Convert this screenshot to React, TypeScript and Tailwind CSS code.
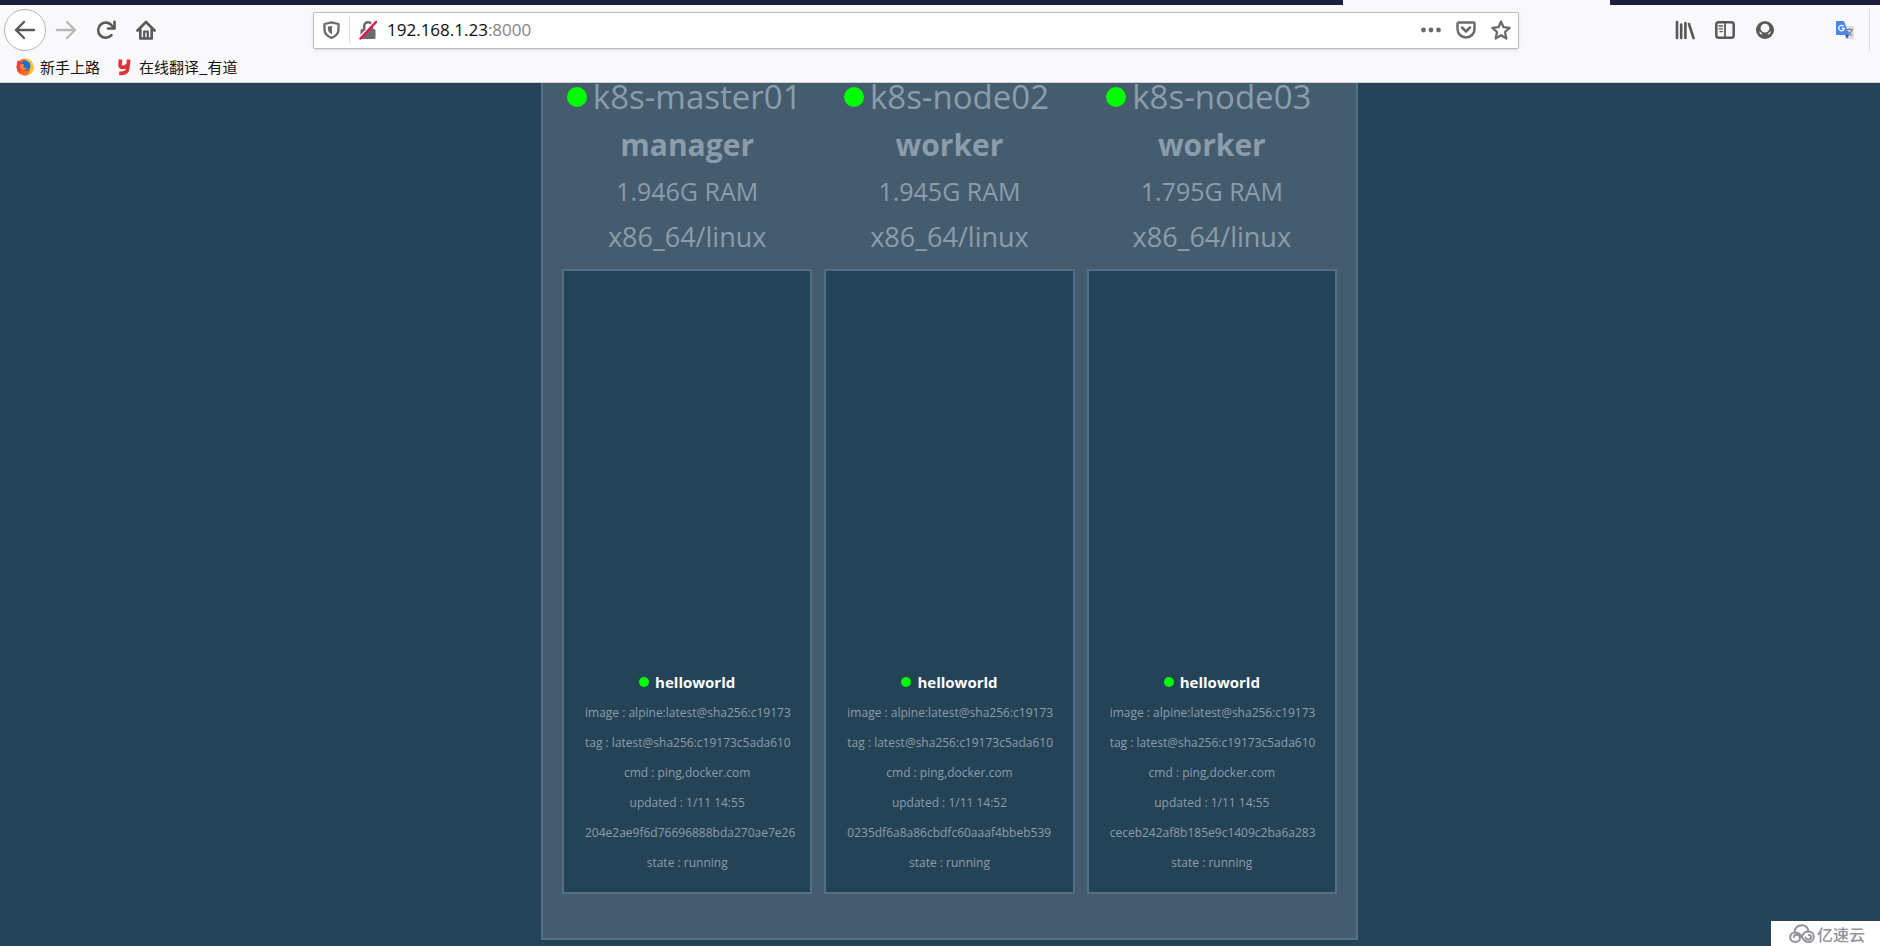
import { ReactNode } from 'react';
import clsx from 'clsx';

const nodes = [
  {
    name: 'k8s-master01',
    role: 'manager',
    ram: '1.946G RAM',
    updated: '1/11 14:55',
    container: '204e2ae9f6d76696888bda270ae7e26',
  },
  {
    name: 'k8s-node02',
    role: 'worker',
    ram: '1.945G RAM',
    updated: '1/11 14:52',
    container: '0235df6a8a86cbdfc60aaaf4bbeb539',
  },
  {
    name: 'k8s-node03',
    role: 'worker',
    ram: '1.795G RAM',
    updated: '1/11 14:55',
    container: 'ceceb242af8b185e9c1409c2ba6a283',
  },
];

const IconButton = ({ label, className, children }: { label: string; className?: string; children: ReactNode }) => (
  <button type="button" aria-label={label} className={clsx('flex shrink-0 items-center justify-center', className)}>
    {children}
  </button>
);

const BackIcon = () => (
  <svg width="22" height="20" viewBox="0 0 22 20" fill="none" stroke="currentColor" strokeWidth="2.4" strokeLinecap="round" strokeLinejoin="round">
    <path d="M20 10H2M10 2 2 10l8 8" />
  </svg>
);

const ForwardIcon = () => (
  <svg width="22" height="20" viewBox="0 0 22 20" fill="none" stroke="currentColor" strokeWidth="2.4" strokeLinecap="round" strokeLinejoin="round">
    <path d="M2 10h18M12 2l8 8-8 8" />
  </svg>
);

const ReloadIcon = () => (
  <svg width="20" height="20" viewBox="0 0 20 20" fill="none" stroke="currentColor" strokeWidth="2.6" strokeLinecap="round" strokeLinejoin="round">
    <path d="M15.5 15.2A7.6 7.6 0 1 1 15.800 5.500L18 8" />
    <path d="M18.5 1.8v6.700H12" />
  </svg>
);

const HomeIcon = () => (
  <svg width="20" height="20" viewBox="0 0 20 20" fill="none" stroke="currentColor" strokeWidth="2.6" strokeLinecap="round" strokeLinejoin="round">
    <path d="M1.5 10.5 10 2l8.500 8.500M4.300 9.500V18.500h11.400V9.500" />
    <path d="M8.2 18v-6.500h3.600V18" strokeWidth="2.2" />
  </svg>
);

const ShieldIcon = () => (
  <svg width="17" height="18" viewBox="0 0 17 18" fill="none" stroke="currentColor" strokeWidth="2.3" strokeLinejoin="round">
    <path d="M8.5 1.3 15.500 3v5.500c0 3.900-3 6.800-7 8.300-4-1.500-7-4.400-7-8.300V3z" />
    <path d="M9 5v8.300C6.500 12 5 10.500 5 8.200V5.600z" fill="currentColor" stroke="none" />
  </svg>
);

const InsecureIcon = () => (
  <svg width="18" height="20" viewBox="0 0 18 20" fill="none">
    <path d="M5.2 10V6a3.800 3.800 0 0 1 7.600 0v4" stroke="#6b6b6d" strokeWidth="2.6" />
    <rect x="1.5" y="9" width="15" height="10" rx="1.5" fill="#6b6b6d" />
    <path d="M.5 17.5 16 1" stroke="#fff" strokeWidth="2" />
    <path d="M1.5 18.5 17 2" stroke="#e3114d" strokeWidth="2.5" strokeLinecap="round" />
  </svg>
);

const DotsIcon = () => (
  <svg width="20" height="6" viewBox="0 0 20 6" fill="currentColor">
    <circle cx="2.5" cy="3" r="2.4" />
    <circle cx="10" cy="3" r="2.4" />
    <circle cx="17.5" cy="3" r="2.4" />
  </svg>
);

const PocketIcon = () => (
  <svg width="20" height="18" viewBox="0 0 20 18" fill="none" stroke="currentColor" strokeWidth="2.5" strokeLinecap="round" strokeLinejoin="round">
    <path d="M2.5 1.5h15a1 1 0 0 1 1 1V8a8.500 8.500 0 0 1-17 0V2.500a1 1 0 0 1 1-1z" />
    <path d="M6 6.500 10 10.500l4-4" />
  </svg>
);

const StarIcon = () => (
  <svg width="20" height="20" viewBox="0 0 20 20" fill="none" stroke="currentColor" strokeWidth="2.3" strokeLinejoin="round">
    <path d="m10 1.500 2.500 5.700 6.100.6-4.600 4.200 1.300 6.500-5.300-3.200-5.300 3.200L6 12 1.400 7.800l6.100-.6z" />
  </svg>
);

const LibraryIcon = () => (
  <svg width="20" height="20" viewBox="0 0 20 20" fill="none" stroke="currentColor" strokeWidth="2.6" strokeLinecap="round">
    <path d="M2 2v16M6.200 4.500V18M10.400 3v15M14 4l4.500 14" />
  </svg>
);

const SidebarIcon = () => (
  <svg width="20" height="18" viewBox="0 0 20 18" fill="none" stroke="currentColor" strokeWidth="2.5">
    <rect x="1.3" y="1.3" width="17.4" height="15.4" rx="2.5" />
    <path d="M10 1v16" strokeWidth="1.8" />
    <path d="M4 5h3.500M4 7.800h3.500M5 10.600h2.500" strokeWidth="1.3" strokeLinecap="round" />
  </svg>
);

const AccountIcon = () => (
  <svg width="18" height="18" viewBox="0 0 18 18">
    <circle cx="9" cy="9" r="9" fill="currentColor" />
    <circle cx="9" cy="7.2" r="4.4" fill="#f9f9fb" />
    <path d="M3.2 10.200c1.200.2 1.800.5 2.400 1.200 1.900 1.900 4.900 1.900 6.800 0 .6-.7 1.200-1 2.400-1.200-.2 1.500-.8 2.400-1.600 3.200-2.400-.9-6-.9-8.400 0-.8-.8-1.400-1.700-1.600-3.200z" fill="#f9f9fb" />
    <path d="M4.800 10.200c2 3.600 6.400 3.600 8.400 0" stroke="currentColor" strokeWidth="1.4" fill="none" />
  </svg>
);

const TranslateIcon = () => (
  <svg width="20" height="20" viewBox="0 0 20 20">
    <path d="M8 6h10a1 1 0 0 1 1 1v11a1 1 0 0 1-1 1h-6z" fill="#dcdcdc" />
    <path d="M11 9.500h7M14.500 8v1.500M17 9.500c-.5 2.500-2.500 4.500-4.500 5.500M12.500 11c1 2 2.500 3.500 4.500 4.500" stroke="#6f8594" strokeWidth="1.2" fill="none" />
    <path d="M10 15h4l-2 4z" fill="#2a56c6" />
    <path d="M2 1h7l5 14H2a1 1 0 0 1-1-1V2a1 1 0 0 1 1-1z" fill="#4a86f0" />
    <path d="M8.600 6.200A2.800 2.800 0 1 0 9.300 8.500H6.800" stroke="#fff" strokeWidth="1.3" fill="none" />
  </svg>
);

const FirefoxIcon = () => (
  <svg width="18" height="18" viewBox="0 0 18 18">
    <circle cx="9" cy="9.2" r="8.5" fill="#ff6a1f" />
    <path d="M9 .8c5 0 8.700 3.500 8.700 8.200 0 4-2.700 7.500-6.700 8.500 3-3 4-7 2.500-10C12.500 5 10.500 4 9 .8z" fill="#ffc928" />
    <path d="M1 6c0-2 .5-3 1.200-4 .5 1 1 1.500 2 1.800L6 7l-2 8C1.500 13 0 9 1 6z" fill="#ff3550" />
    <circle cx="9.3" cy="7.6" r="5.2" fill="#1e6fd0" />
    <path d="M4.200 6c1.500-.8 2.800-.2 4 1-1 .6-1.200 1.200-.8 2s2.300 1 3.600.6c-.8 2-3.200 3-5.200 1.800-1.600-1-2.400-3.400-1.600-5.400z" fill="#ff8a1a" />
  </svg>
);

const YoudaoIcon = () => (
  <svg width="14" height="18" viewBox="0 0 14 18" fill="none" stroke="#e0323c" strokeWidth="3.6" strokeLinejoin="round">
    <path d="M3.500 1.500 3 6.500c-.2 2 .8 2.900 2.700 2.900 2.200 0 3.600-.9 4.700-2.400M11.700 1.500l-1 9c-.4 3.500-3 5.300-8.500 4.800" />
  </svg>
);

const CloudLogo = () => (
  <svg width="26" height="20" viewBox="0 0 26 20" fill="none" stroke="currentColor" strokeWidth="2" strokeLinecap="round">
    <path d="M5.500 8.500C5.500 4.300 8.500 1.300 12.500 1.300c3.700 0 6.500 2.400 7 6.200 3 0 5.300 2.300 5.300 5.200s-2.300 5.300-5.300 5.300c-3.500 0-5-2.200-6.500-5-1.700-3-3.700-4.500-6.700-4.500-3 0-5.100 2-5.100 4.700S3.300 18 6.300 18c2.800 0 4.700-1.800 4.700-4 0-1.800-1.500-3.200-3.300-3.200-1.500 0-2.600 1-2.600 2.300" />
    <path d="M13.500 11.500c1-2.500 3-4 6-4M16.500 13.500c.5 1.300 1.600 2 3 2 1.500 0 2.500-1 2.500-2.300s-1-2.200-2.300-2.200" />
  </svg>
);

const BrowserChrome = () => (
  <header className="relative z-10 border-b border-[#cfcfd3] bg-[#f9f9fb] text-[#58585a]">
    <div className="flex h-[5px] justify-end">
      <div className="flex-1 bg-[#1c1e3d]" />
      <div className="w-[267px]" />
      <div className="w-[270px] bg-[#1c1e3d]" />
    </div>

    <div className="flex h-[50px] items-center pl-1">
      <nav className="flex items-center">
        <IconButton label="Back" className="size-[42px] rounded-full border border-[#b5b5b8] bg-white">
          <BackIcon />
        </IconButton>
        <IconButton label="Forward" className="size-10 text-[#b9b9bb]">
          <ForwardIcon />
        </IconButton>
        <IconButton label="Reload" className="size-10">
          <ReloadIcon />
        </IconButton>
        <IconButton label="Home" className="size-10">
          <HomeIcon />
        </IconButton>
      </nav>

      <div className="ml-[147px] flex h-[37px] flex-1 items-center rounded-xs border border-[#bdbdc0] bg-white text-[#6b6b6d] shadow-sm">
        <IconButton label="Tracking protection" className="w-[35px]">
          <ShieldIcon />
        </IconButton>
        <div className="h-[26px] w-px bg-[#dedee0]" />
        <IconButton label="Connection is not secure" className="w-[35px]">
          <InsecureIcon />
        </IconButton>
        <label className="relative ml-[2px] flex h-full flex-1 items-center text-[17px]">
          <span className="pointer-events-none absolute text-[#848487]">
            <span className="text-[#0c0c0d]">192.168.1.23</span>:8000
          </span>
          <input aria-label="Address" className="h-full w-full bg-transparent outline-none" />
        </label>
        <IconButton label="Page actions" className="w-[35px]">
          <DotsIcon />
        </IconButton>
        <IconButton label="Save to Pocket" className="w-[35px]">
          <PocketIcon />
        </IconButton>
        <IconButton label="Bookmark this page" className="w-[35px]">
          <StarIcon />
        </IconButton>
      </div>

      <div className="ml-[146px] flex items-center">
        <IconButton label="Library" className="w-10">
          <LibraryIcon />
        </IconButton>
        <IconButton label="Sidebars" className="w-10">
          <SidebarIcon />
        </IconButton>
        <IconButton label="Account" className="w-10">
          <AccountIcon />
        </IconButton>
        <IconButton label="Translate" className="ml-10 w-10">
          <TranslateIcon />
        </IconButton>
        <div className="mr-[10px] ml-1 h-[42px] w-px bg-[#dcdce0]" />
      </div>
    </div>

    <div className="flex h-[27px] items-start gap-[17px] pl-4 font-['Noto_Sans_CJK_SC',sans-serif] text-[15px] leading-6 text-[#151515]">
      <a href="#start" className="flex items-center gap-[6px]">
        <FirefoxIcon />
        新手上路
      </a>
      <a href="#translate" className="flex items-center gap-2">
        <YoudaoIcon />
        在线翻译_有道
      </a>
    </div>
  </header>
);

const NodeColumn = ({ node }: { node: (typeof nodes)[number] }) => (
  <section className="flex-1 text-center text-[#8b9dab]">
    {/* the node name sits half under the toolbar, as the page is scrolled */}
    <h2 className="mb-3 flex h-[27px] items-center justify-center gap-[6px] pr-[6px] text-[33px] leading-none whitespace-nowrap">
      <span className="size-5 shrink-0 rounded-full bg-[#00ff00]" />
      {node.name}
    </h2>
    <p className="text-3xl leading-[46px] font-bold">{node.role}</p>
    <p className="text-[25px] leading-[46px]">{node.ram}</p>
    <p className="text-[27px] leading-[46px]">x86_64/linux</p>

    <div className="mt-[9px] flex h-[625px] flex-col justify-end border-2 border-[#507086] bg-[#254356] px-[21px] pb-[14px]">
      <h3 className="flex items-center justify-center gap-[6px] text-[15px] leading-8 font-bold text-white">
        <span className="size-[10px] rounded-full bg-[#00ff00]" />
        helloworld
      </h3>
      <ul className="text-xs leading-[30px] whitespace-nowrap">
        <li className="-mr-2 text-left">image : alpine:latest@sha256:c19173</li>
        <li className="-mr-2 text-left">tag : latest@sha256:c19173c5ada610</li>
        <li>cmd : ping,docker.com</li>
        <li>updated : {node.updated}</li>
        <li className="-mr-2 text-left">{node.container}</li>
        <li>state : running</li>
      </ul>
    </div>
  </section>
);

const App = () => (
  <div className="relative flex h-screen flex-col overflow-hidden bg-[#254356] font-['Open_Sans',sans-serif]">
    <BrowserChrome />
    <main className="flex flex-1 items-start justify-center pl-[19px]">
      <div className="flex w-full max-w-[817px] gap-3 border-2 border-t-0 border-[#507086] bg-[#455c6e] px-[19px] pb-[44px]">
        {nodes.map((node) => (
          <NodeColumn key={node.name} node={node} />
        ))}
      </div>
    </main>
    <div className="absolute right-0 bottom-0 flex h-[25px] w-[109px] items-center gap-[2px] bg-white pl-[18px] font-['Noto_Sans_CJK_SC',sans-serif] text-base font-medium text-[#92929b]">
      <CloudLogo />
      亿速云
    </div>
  </div>
);

export default App;
